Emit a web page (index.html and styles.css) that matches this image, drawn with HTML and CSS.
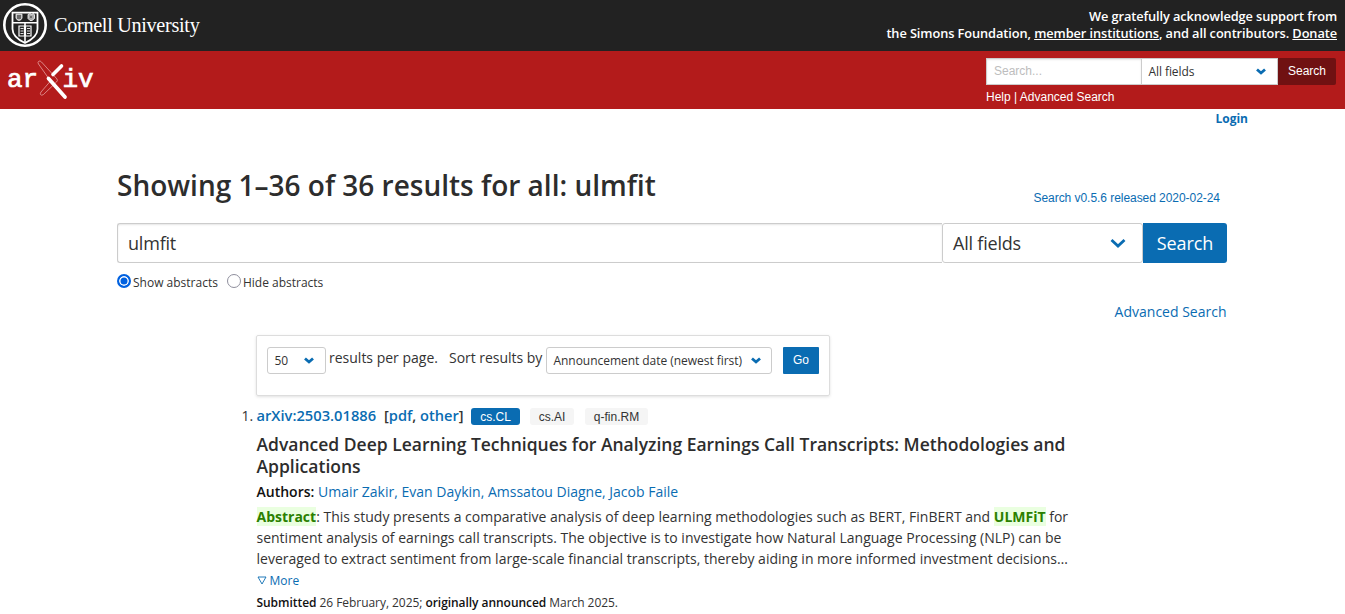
FILE: index.html
```html
<!DOCTYPE html>
<html lang="en">
<head>
<meta charset="utf-8">
<title>Search | arXiv e-print repository</title>
<link rel="stylesheet" href="styles.css">
</head>
<body>
<header>
  <div class="support">
    <svg class="cornell" width="210" height="51" viewBox="0 0 210 51" role="img" aria-label="Cornell University">
      <circle cx="25" cy="25" r="20.7" fill="none" stroke="#fff" stroke-width="2.6"/>
      <path d="M12.500 12.700H37.500V29Q37.500 37 25 43Q12.500 37 12.500 29Z" fill="none" stroke="#fff" stroke-width="1.8"/>
      <path d="M13 22.700H37M25 23V42" stroke="#fff" stroke-width="1.6"/>
      <path d="M16 14.200H22V18Q21.500 20 19 20.500Q16.500 20 16 18ZM28 14.500L30 13.500L31.500 14.500L33.500 13.500L34.500 15V18.500L32 20.500H30L28 18.500Z" fill="#aaa" stroke="#fff" stroke-width=".8"/>
      <path d="M17 16H21M17 18H21M30 17H32" stroke="#222" stroke-width=".9"/>
      <path d="M19 26H24.500V36H19ZM25.500 26H31V36H25.500Z" fill="none" stroke="#fff" stroke-width="1.200"/>
      <path d="M20.500 28.500H23.500M20.500 31H23.500M20.500 33.500H23.500M27 28.500H30M27 31H30M27 33.500H30" stroke="#ddd"/>
      <text x="54" y="32" class="cornell-text">Cornell University</text>
    </svg>
    <p class="ack">We gratefully acknowledge support from<br><span class="ack2">the Simons Foundation, <a href="#">member institutions</a>, and all contributors. <a href="#">Donate</a></span></p>
  </div>
  <div class="brand">
    <svg class="arxiv" width="100" height="50" viewBox="0 0 100 50" role="img" aria-label="arXiv">
      <text x="7" y="31" class="arxiv-text">ar</text>
      <text x="62.500" y="31" class="arxiv-text">iv</text>
      <path d="M38.500 5.500Q40 4 41.500 6L57 23Q58 24.500 56.500 26L43.500 38.500Q41.500 40 40.500 38.500Q40 37.500 41 36L50.500 25L38.500 8Q37.500 6.500 38.500 5.500Z" fill="none" stroke="#e4a0a0" stroke-width=".8"/>
      <path d="M61.500 10L53 18.500" stroke="#fff" stroke-width="3.600" stroke-linecap="round"/>
      <path d="M48.500 22.500L65 41" stroke="#fff" stroke-width="3.700" stroke-linecap="round"/>
    </svg>
    <form class="mini">
      <div class="mini-row">
        <span class="mini-input">Search...</span><span class="mini-select">All fields<svg class="chev" viewBox="0 0 10 7"><path d="M1 1.500L5 5L9 1.500"/></svg></span><span class="mini-btn">Search</span>
      </div>
      <p class="mini-links"><a href="#">Help</a> | <a href="#">Advanced Search</a></p>
    </form>
  </div>
</header>
<div class="user"><a href="#">Login</a></div>
<main>
  <div class="title-row">
    <h1>Showing 1–36 of 36 results for all: ulmfit</h1>
    <a class="version" href="#">Search v0.5.6 released 2020-02-24</a>
  </div>
  <div class="search-row">
    <span class="query">ulmfit</span><span class="field">All fields<svg class="chev big" viewBox="0 0 16 10"><path d="M1.500 2L8 8L14.500 2"/></svg></span><span class="go-search">Search</span>
  </div>
  <div class="radios">
    <span class="radio on"></span><span class="show">Show abstracts</span><span class="radio"></span><span>Hide abstracts</span>
  </div>
  <div class="adv"><a href="#">Advanced Search</a></div>
  <div class="content">
    <div class="box">
      <span class="select size">50<svg class="chev" viewBox="0 0 10 7"><path d="M1 1.500L5 5L9 1.500"/></svg></span>
      <span class="label per">results per page.</span>
      <span class="label by">Sort results by</span>
      <span class="select sort">Announcement date (newest first)<svg class="chev" viewBox="0 0 10 7"><path d="M1 1.500L5 5L9 1.500"/></svg></span>
      <span class="go">Go</span>
    </div>
    <article>
      <div class="id-row">
        <span class="num">1.</span><span class="id"><a href="#">arXiv:2503.01886</a></span><span class="formats">[<a href="#">pdf</a>, <a href="#">other</a>]</span>
        <span class="tag primary">cs.CL</span><span class="tag ai">cs.AI</span><span class="tag rm">q-fin.RM</span>
      </div>
      <h2>Advanced Deep Learning Techniques for Analyzing Earnings Call Transcripts: Methodologies and<br>Applications</h2>
      <p class="authors"><b>Authors:</b> <a href="#">Umair Zakir</a>, <a href="#">Evan Daykin</a>, <a href="#">Amssatou Diagne</a>, <a href="#">Jacob Faile</a></p>
      <p class="abstract"><span class="hit">Abstract</span>: This study presents a comparative analysis of deep learning methodologies such as BERT, FinBERT and <span class="hit">ULMFiT</span> for<br>sentiment analysis of earnings call transcripts. The objective is to investigate how Natural Language Processing (NLP) can be<br>leveraged to extract sentiment from large-scale financial transcripts, thereby aiding in more informed investment decisions…</p>
      <p class="more"><a href="#"><svg width="10" height="9" viewBox="0 0 10 9"><path d="M1 1H9L5 8Z" fill="none" stroke="#0a6cb2" stroke-width=".9"/></svg>More</a></p>
      <p class="dates"><b>Submitted</b> 26 February, 2025; <b>originally announced</b> March 2025.</p>
    </article>
  </div>
</main>
</body>
</html>
```

FILE: styles.css
```css
* { box-sizing: border-box; }
html { overflow: hidden; }
body, h1, h2, p { margin: 0; }
body { height: 614px; overflow: hidden; background: #fff; color: #333; font: 14px/21px "Open Sans", sans-serif; }
a { color: #0a6cb2; text-decoration: none; }
svg { display: block; flex: none; }

.support { height: 51px; background: #222; display: flex; justify-content: space-between; }
.cornell { overflow: visible; }
.cornell-text { font-family: "Liberation Serif", serif; font-size: 20.2px; letter-spacing: -.3px; fill: #fff; }
.ack { padding: 8px 8px 0 0; color: #fff; text-align: right; font-size: 12.8px; line-height: 17px; font-weight: 600; white-space: nowrap; letter-spacing: -.1px; }
.ack2 { letter-spacing: -.09px; }
.ack a { color: #fff; text-decoration: underline; }

.brand { height: 58px; background: #b31b1b; display: flex; justify-content: space-between; }
.arxiv { margin-top: 5px; }
.arxiv-text { font: 26px "Liberation Mono", monospace; fill: #fff; stroke: #fff; stroke-width: .7px; }
.mini { width: 359px; padding: 7px 9px 0 0; font-family: "Liberation Sans", sans-serif; font-size: 12px; }
.mini-row { display: flex; height: 27px; line-height: 25px; }
.mini-input { width: 155px; padding-left: 7px; background: #fff; border: 1px solid #ccc; border-right: 0; color: #bdbdbd; box-shadow: inset 0 1px 2px rgba(10,10,10,.1); }
.mini-select { width: 137px; padding: 0 11px 0 6.5px; background: #fff; border: 1px solid #ccc; display: flex; align-items: center; justify-content: space-between; font-family: "Open Sans", sans-serif; letter-spacing: -.08px; }
.mini-btn { width: 58px; line-height: 27px; text-align: center; background: #701112; color: #fff; border-radius: 0 2px 2px 0; }
.mini-links { color: #fff; line-height: 16px; padding-top: 4px; }
.mini-links a { color: #fff; }
.chev { width: 10px; height: 7px; fill: none; stroke: #0a6cb2; stroke-width: 2.8; }
.chev.big { width: 16px; height: 10px; stroke-width: 2.8; }

.user { height: 20px; padding-right: 97px; text-align: right; font-size: 12px; line-height: 20px; font-weight: 700; }
main { width: 1110px; margin-left: 117px; }
.title-row { height: 94px; display: flex; justify-content: space-between; padding: 38px 7px 0 0; }
h1 { font-size: 28px; line-height: 36px; font-weight: 600; white-space: nowrap; color: #2d2d2d; }
.version { font: 12px/18px "Liberation Sans", sans-serif; padding-top: 22px; letter-spacing: -.05px; }
.search-row { display: flex; height: 40px; font-size: 18px; line-height: 38px; letter-spacing: -.2px; }
.query { width: 825px; padding-left: 10px; border: 1px solid #ccc; border-right: 0; border-radius: 3px 0 0 3px; box-shadow: inset 0 1px 2px rgba(10,10,10,.1); }
.field { width: 201px; border: 1px solid #ccc; border-radius: 3px; padding: 0 16px 0 10px; display: flex; align-items: center; justify-content: space-between; }
.go-search { width: 84px; line-height: 40px; text-align: center; background: #0a6cb2; color: #fff; border-radius: 0 3px 3px 0; letter-spacing: -.1px; }
.radios { display: flex; height: 38px; padding-top: 9px; font-size: 12px; line-height: 21px; }
.radio { width: 14px; height: 14px; margin: 2px 2px 0 0; border: 1px solid #8f8f9d; border-radius: 50%; background: #fff; }
.radio.on { border: 2px solid #0061e0; box-shadow: inset 0 0 0 1.5px #fff; background: #0061e0; }
.show { margin-right: 9px; }
.adv { text-align: right; height: 34px; padding-right: .5px; }

.content { width: 832px; margin-left: 139px; }
.box { width: 574px; height: 61px; display: flex; padding: 11px 10px 0; border: 1px solid #ddd; border-radius: 2px; box-shadow: 0 1px 3px rgba(0,0,0,.12); white-space: nowrap; }
.select { height: 27px; border: 1px solid #ccc; border-radius: 3px; font-size: 12px; display: flex; align-items: center; justify-content: space-between; padding: 0 11px 0 6.5px; }
.size { width: 59px; }
.label { line-height: 22px; }
.per { width: 120px; margin-left: 3px; }
.by { width: 94px; letter-spacing: -.03px; }
.sort { width: 226px; margin-left: 3px; padding-right: 10px; letter-spacing: -.04px; }
.go { width: 36px; height: 27px; margin-left: 11px; background: #0a6cb2; color: #fff; text-align: center; border-radius: 1px; font: 12px/26px "Liberation Sans", sans-serif; }

article { padding-left: .5px; }
.id-row { display: flex; height: 37px; padding-top: 9px; margin-left: -15px; }
.num { width: 15px; }
.id { width: 127.5px; font-size: 14.7px; font-weight: 600; }
.formats { width: 87px; font-size: 14.6px; font-weight: 600; }
.tag { height: 17px; margin-top: 3px; border-radius: 3px; background: #f5f5f5; text-align: center; font: 12px/18px "Liberation Sans", sans-serif; }
.primary { width: 49px; background: #0a6cb2; color: #fff; }
.ai { width: 44px; margin-left: 10px; }
.rm { width: 63px; margin-left: 11px; }
h2 { font-size: 17.5px; line-height: 22px; font-weight: 600; white-space: nowrap; color: #2d2d2d; }
.authors { padding-top: 4px; color: #0a6cb2; }
.authors b, .dates b { color: #111; font-weight: 600; }
.abstract { padding-top: 4px; white-space: nowrap; }
.hit { color: #2b8000; font-weight: 700; background: #eaffe0; }
.more { font-size: 12px; line-height: 21px; padding-top: 1px; }
.more svg { display: inline-block; margin-right: 3px; }
.dates { font-size: 12px; line-height: 21px; padding-top: 1px; letter-spacing: -.05px; }
```
